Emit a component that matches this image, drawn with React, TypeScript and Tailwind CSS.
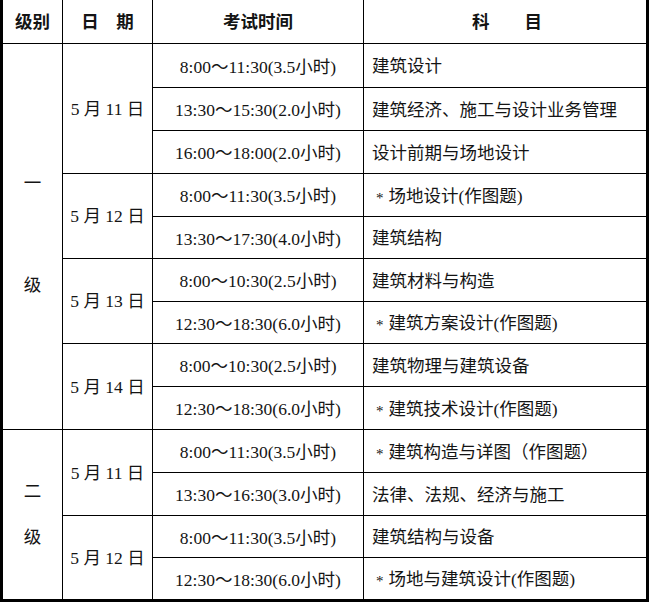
import React from "react";

type Row = { time: string; subject: string; star?: boolean };
type DateGroup = { date: string; rows: Row[] };
type Level = { name: string[]; gap: string; dates: DateGroup[] };

const levels: Level[] = [
  {
    name: ["一", "级"],
    gap: "gap-[75px] pb-[5px]",
    dates: [
      {
        date: "5 月 11 日",
        rows: [
          { time: "8:00～11:30(3.5小时)", subject: "建筑设计" },
          { time: "13:30～15:30(2.0小时)", subject: "建筑经济、施工与设计业务管理" },
          { time: "16:00～18:00(2.0小时)", subject: "设计前期与场地设计" },
        ],
      },
      {
        date: "5 月 12 日",
        rows: [
          { time: "8:00～11:30(3.5小时)", subject: "场地设计(作图题)", star: true },
          { time: "13:30～17:30(4.0小时)", subject: "建筑结构" },
        ],
      },
      {
        date: "5 月 13 日",
        rows: [
          { time: "8:00～10:30(2.5小时)", subject: "建筑材料与构造" },
          { time: "12:30～18:30(6.0小时)", subject: "建筑方案设计(作图题)", star: true },
        ],
      },
      {
        date: "5 月 14 日",
        rows: [
          { time: "8:00～10:30(2.5小时)", subject: "建筑物理与建筑设备" },
          { time: "12:30～18:30(6.0小时)", subject: "建筑技术设计(作图题)", star: true },
        ],
      },
    ],
  },
  {
    name: ["二", "级"],
    gap: "gap-[19px] pb-[1px]",
    dates: [
      {
        date: "5 月 11 日",
        rows: [
          { time: "8:00～11:30(3.5小时)", subject: "建筑构造与详图（作图题）", star: true },
          { time: "13:30～16:30(3.0小时)", subject: "法律、法规、经济与施工" },
        ],
      },
      {
        date: "5 月 12 日",
        rows: [
          { time: "8:00～11:30(3.5小时)", subject: "建筑结构与设备" },
          { time: "12:30～18:30(6.0小时)", subject: "场地与建筑设计(作图题)", star: true },
        ],
      },
    ],
  },
];

const spanClass: Record<number, string> = {
  2: "row-span-2",
  3: "row-span-3",
  4: "row-span-4",
  9: "row-span-9",
};

const cell = "flex items-center border-black";
const headFont = { fontFamily: '"Noto Sans CJK SC", sans-serif' };

export default function App() {
  return (
    <div className="bg-white w-[650px] h-[603px]">
      <div
        className="grid w-[649px] grid-cols-[60px_90px_211px_282px] grid-rows-[44px_44px_43px_43px_43px_42px_43px_42px_43px_43px_43px_43px_42px_41px] border-l-[3px] border-r-[3px] border-b-[3px] border-black text-[17.5px] text-[#141414]"
        style={{ fontFamily: '"Liberation Serif", "Noto Sans CJK SC", serif' }}
      >
        {/* header */}
        <div className={`${cell} justify-center border-r border-b font-bold`} style={headFont}>
          级别
        </div>
        <div className={`${cell} justify-center border-r border-b font-bold`} style={headFont}>
          日　期
        </div>
        <div className={`${cell} justify-center border-r border-b font-bold`} style={headFont}>
          考试时间
        </div>
        <div className={`${cell} justify-center border-b font-bold pl-[4px]`} style={headFont}>
          科　　目
        </div>

        {levels.map((lv, li) => {
          const lastLevel = li === levels.length - 1;
          const total = lv.dates.reduce((n, d) => n + d.rows.length, 0);
          return lv.dates.map((d, di) => {
            const lastDate = lastLevel && di === lv.dates.length - 1;
            return d.rows.map((r, ri) => {
              const lastRow = lastDate && ri === d.rows.length - 1;
              return (
                <React.Fragment key={`${li}-${di}-${ri}`}>
                  {di === 0 && ri === 0 && (
                    <div
                      className={`${cell} ${spanClass[total]} flex-col justify-center border-r ${lastLevel ? "" : "border-b"} ${lv.gap}`}
                    >
                      <span>{lv.name[0]}</span>
                      <span>{lv.name[1]}</span>
                    </div>
                  )}
                  {ri === 0 && (
                    <div
                      className={`${cell} ${spanClass[d.rows.length]} justify-center border-r ${lastDate ? "" : "border-b"} pt-[1px]`}
                    >
                      {d.date}
                    </div>
                  )}
                  <div className={`${cell} justify-center border-r ${lastRow ? "" : "border-b"} pt-[3px]`}>
                    {r.time}
                  </div>
                  <div className={`${cell} ${lastRow ? "" : "border-b"} ${r.star ? "pl-[12px]" : "pl-2"} pt-[2px]`}>
                    {r.star && <span className="inline-block mr-[5px] translate-y-[2px] text-[15px]">*</span>}
                    <span>{r.subject}</span>
                  </div>
                </React.Fragment>
              );
            });
          });
        })}
      </div>
    </div>
  );
}
